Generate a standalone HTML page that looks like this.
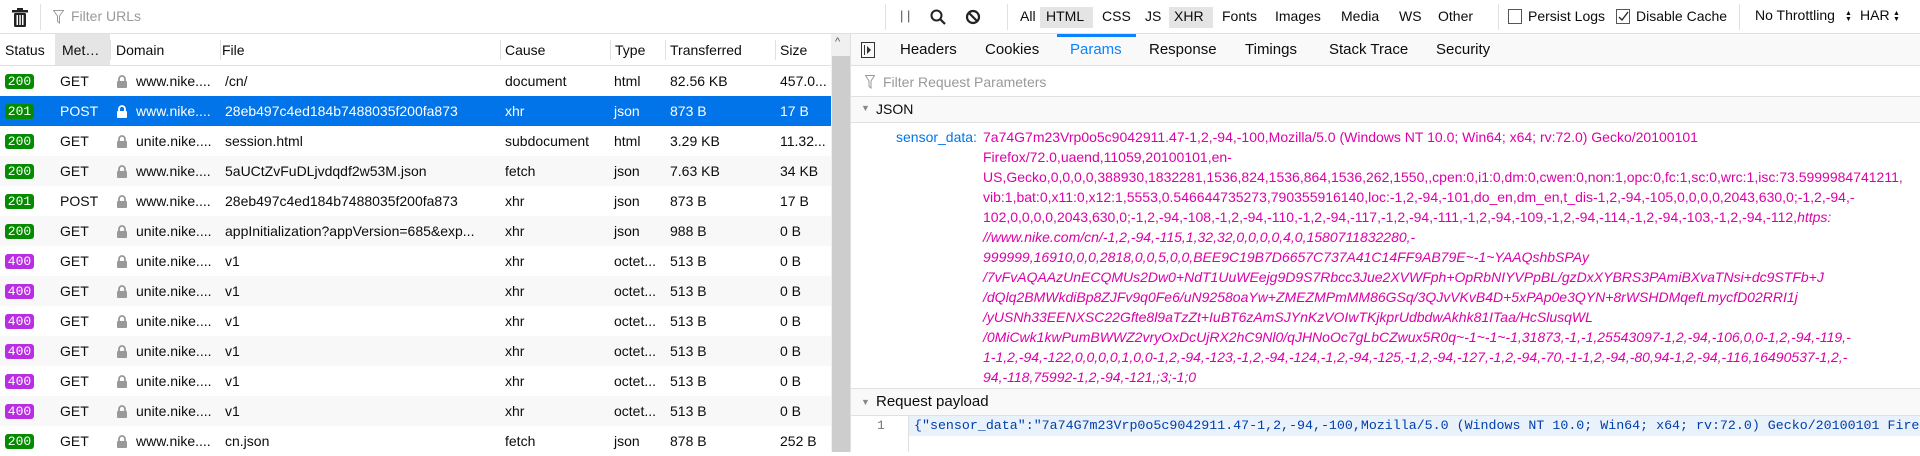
<!DOCTYPE html>
<html><head><meta charset="utf-8"><style>
*{box-sizing:border-box;margin:0;padding:0}
body{width:1920px;height:452px;overflow:hidden;background:#fff;font-family:"Liberation Sans",sans-serif;font-size:14px;color:#0c0c0d;position:relative}
.a{position:absolute;white-space:nowrap}
.row{position:absolute;left:0;width:831px;height:30px}
.row span{position:absolute;top:7px;white-space:nowrap}
.b{position:absolute;left:5px;top:8px!important;width:29px;height:15px;border-radius:3px;color:#fff;font-family:"Liberation Mono",monospace;font-size:13px;line-height:15px;text-align:center}
.g{background:#058b00}.p{background:#b92de3}
.lk{position:absolute;left:117px;top:9px;width:10px;height:13px}
.m{color:#dd00a9;font-size:14px;line-height:20px}
.m i{font-style:italic}
</style></head><body>
<!-- toolbar -->
<div class="a" style="left:0;top:0;width:1920px;height:34px;border-bottom:1px solid #e0e0e2;background:#fff"></div>
<svg class="a" style="left:12px;top:8px" width="16" height="19" viewBox="0 0 16 19"><rect x="0" y="2" width="16" height="2.5" fill="#222"/><rect x="5" y="0" width="6" height="2.5" fill="#222"/><rect x="2" y="5" width="12" height="14" rx="1.5" fill="#222"/><rect x="4.5" y="7" width="1.5" height="10" fill="#fff"/><rect x="7.3" y="7" width="1.5" height="10" fill="#fff"/><rect x="10" y="7" width="1.5" height="10" fill="#fff"/></svg>
<div class="a" style="left:40px;top:4px;width:1px;height:26px;background:#e0e0e2"></div>
<svg class="a" style="left:53px;top:10px" width="11" height="14" viewBox="0 0 11 14"><path d="M0.5 0.5h10L6.5 6v7l-2-1.5V6z" fill="none" stroke="#999" stroke-width="1"/></svg>
<div class="a" style="left:71px;top:8px;color:#999;font-size:14px">Filter URLs</div>
<div class="a" style="left:885px;top:4px;width:1px;height:26px;background:#e0e0e2"></div>
<div class="a" style="left:900px;top:8px;color:#555;font-size:13px">| |</div>
<svg class="a" style="left:930px;top:9px" width="16" height="16" viewBox="0 0 16 16"><circle cx="6.5" cy="6.5" r="5" fill="none" stroke="#222" stroke-width="2"/><path d="M10 10l5 5" stroke="#222" stroke-width="2.2"/></svg>
<svg class="a" style="left:965px;top:9px" width="16" height="16" viewBox="0 0 16 16"><circle cx="8" cy="8" r="6" fill="none" stroke="#222" stroke-width="2.2"/><path d="M4 4l8 8" stroke="#222" stroke-width="2.2"/></svg>
<div class="a" style="left:1007px;top:4px;width:1px;height:26px;background:#e0e0e2"></div>
<div class="a" style="left:1040px;top:7px;width:53px;height:21px;background:#e4e4e5"></div>
<div class="a" style="left:1169px;top:7px;width:44px;height:21px;background:#e4e4e5"></div>
<div class="a" style="left:1013px;top:8px;font-size:14px;word-spacing:0">
<span class="a" style="left:7px">All</span><span class="a" style="left:33px">HTML</span><span class="a" style="left:89px">CSS</span><span class="a" style="left:132px">JS</span><span class="a" style="left:161px">XHR</span><span class="a" style="left:209px">Fonts</span><span class="a" style="left:262px">Images</span><span class="a" style="left:328px">Media</span><span class="a" style="left:386px">WS</span><span class="a" style="left:425px">Other</span></div>
<div class="a" style="left:1498px;top:4px;width:1px;height:26px;background:#e0e0e2"></div>
<div class="a" style="left:1508px;top:9px;width:14px;height:15px;border:1px solid #555;background:#fff"></div>
<div class="a" style="left:1528px;top:8px">Persist Logs</div>
<div class="a" style="left:1616px;top:9px;width:14px;height:15px;border:1px solid #555;background:#fff"></div>
<svg class="a" style="left:1618px;top:11px" width="11" height="11" viewBox="0 0 11 11"><path d="M1 6l3 3 6-8" fill="none" stroke="#222" stroke-width="1.3"/></svg>
<div class="a" style="left:1636px;top:8px">Disable Cache</div>
<div class="a" style="left:1739px;top:4px;width:1px;height:26px;background:#e0e0e2"></div>
<div class="a" style="left:1755px;top:7px">No Throttling</div>
<div class="a" style="left:1845px;top:11px;font-size:7px;line-height:6px">▲<br>▼</div>
<div class="a" style="left:1860px;top:7px">HAR</div>
<div class="a" style="left:1893px;top:11px;font-size:7px;line-height:6px">▲<br>▼</div>

<!-- left header -->
<div class="a" style="left:0;top:34px;width:831px;height:32px;background:#fff;border-bottom:1px solid #e0e0e2"></div>
<div class="a" style="left:55px;top:34px;width:55px;height:31px;background:#e5e5e5"></div>
<div class="a" style="left:0;top:42px">
<span class="a" style="left:5px">Status</span><span class="a" style="left:62px">Met…</span><span class="a" style="left:116px">Domain</span><span class="a" style="left:222px">File</span><span class="a" style="left:505px">Cause</span><span class="a" style="left:615px">Type</span><span class="a" style="left:670px">Transferred</span><span class="a" style="left:780px">Size</span></div>
<div class="a" style="left:110px;top:40px;width:1px;height:20px;background:#e0e0e2"></div>
<div class="a" style="left:220px;top:40px;width:1px;height:20px;background:#e0e0e2"></div>
<div class="a" style="left:500px;top:40px;width:1px;height:20px;background:#e0e0e2"></div>
<div class="a" style="left:610px;top:40px;width:1px;height:20px;background:#e0e0e2"></div>
<div class="a" style="left:665px;top:40px;width:1px;height:20px;background:#e0e0e2"></div>
<div class="a" style="left:775px;top:40px;width:1px;height:20px;background:#e0e0e2"></div>

<div id="rows"></div>
<!-- scrollbar -->
<div class="a" style="left:831px;top:34px;width:20px;height:418px;background:#f0f0f0"></div>
<div class="a" style="left:832px;top:56px;width:18px;height:396px;background:#cdcdcd"></div>
<div class="a" style="left:835px;top:36px;font-size:11px;color:#555">^</div>

<!-- right panel -->
<div class="a" style="left:850px;top:34px;width:1px;height:418px;background:#e0e0e2"></div>
<div class="a" style="left:851px;top:34px;width:1069px;height:32px;background:#f9f9fa;border-bottom:1px solid #e0e0e2"></div>
<div class="a" style="left:861px;top:42px;width:14px;height:16px;border:1px solid #333"></div>
<div class="a" style="left:864px;top:45px;width:1px;height:10px;background:#333"></div>
<svg class="a" style="left:867px;top:46px" width="5" height="8"><path d="M0 0l4 4-4 4z" fill="#333"/></svg>
<div class="a" style="left:1057px;top:34px;width:79px;height:3px;background:#0a84ff"></div>
<div class="a" style="left:0;top:41px;font-size:15px">
<span class="a" style="left:900px">Headers</span><span class="a" style="left:985px">Cookies</span><span class="a" style="left:1070px;color:#0a84ff">Params</span><span class="a" style="left:1149px">Response</span><span class="a" style="left:1245px">Timings</span><span class="a" style="left:1329px">Stack Trace</span><span class="a" style="left:1436px">Security</span></div>
<div class="a" style="left:851px;top:66px;width:1069px;height:31px;border-bottom:1px solid #e0e0e2"></div>
<svg class="a" style="left:865px;top:75px" width="10" height="14" viewBox="0 0 10 14"><path d="M0.5 0.5h9L6 6v7L4 11.5V6z" fill="none" stroke="#999"/></svg>
<div class="a" style="left:883px;top:74px;color:#999">Filter Request Parameters</div>
<div class="a" style="left:851px;top:97px;width:1069px;height:26px;background:#f9f9fa;border-bottom:1px solid #e0e0e2"></div>
<div class="a" style="left:861px;top:103px;font-size:9px;color:#888">▼</div>
<div class="a" style="left:876px;top:101px;font-size:14px">JSON</div>
<div class="a" style="left:896px;top:127px;color:#0074e8;font-size:14px;line-height:20px">sensor_data:</div>
<div class="a m" style="left:983px;top:127px">
<div>7a74G7m23Vrp0o5c9042911.47-1,2,-94,-100,Mozilla/5.0 (Windows NT 10.0; Win64; x64; rv:72.0) Gecko/20100101</div>
<div>Firefox/72.0,uaend,11059,20100101,en-</div>
<div>US,Gecko,0,0,0,0,388930,1832281,1536,824,1536,864,1536,262,1550,,cpen:0,i1:0,dm:0,cwen:0,non:1,opc:0,fc:1,sc:0,wrc:1,isc:73.5999984741211,</div>
<div>vib:1,bat:0,x11:0,x12:1,5553,0.546644735273,790355916140,loc:-1,2,-94,-101,do_en,dm_en,t_dis-1,2,-94,-105,0,0,0,0,2043,630,0;-1,2,-94,-</div>
<div>102,0,0,0,0,2043,630,0;-1,2,-94,-108,-1,2,-94,-110,-1,2,-94,-117,-1,2,-94,-111,-1,2,-94,-109,-1,2,-94,-114,-1,2,-94,-103,-1,2,-94,-112,<i>https:</i></div>
<div><i>//www.nike.com/cn/-1,2,-94,-115,1,32,32,0,0,0,0,4,0,1580711832280,-</i></div>
<div><i>999999,16910,0,0,2818,0,0,5,0,0,BEE9C19B7D6657C737A41C14FF9AB79E~-1~YAAQshbSPAy</i></div>
<div><i>/7vFvAQAAzUnECQMUs2Dw0+NdT1UuWEejg9D9S7Rbcc3Jue2XVWFph+OpRbNIYVPpBL/gzDxXYBRS3PAmiBXvaTNsi+dc9STFb+J</i></div>
<div><i>/dQlq2BMWkdiBp8ZJFv9q0Fe6/uN9258oaYw+ZMEZMPmMM86GSq/3QJvVKvB4D+5xPAp0e3QYN+8rWSHDMqefLmycfD02RRI1j</i></div>
<div><i>/yUSNh33EENXSC22Gfte8l9aTzZt+IuBT6zAmSJYnKzVOIwTKjkprUdbdwAkhk81ITaa/HcSlusqWL</i></div>
<div><i>/0MiCwk1kwPumBWWZ2vryOxDcUjRX2hC9Nl0/qJHNoOc7gLbCZwux5R0q~-1~-1~-1,31873,-1,-1,25543097-1,2,-94,-106,0,0-1,2,-94,-119,-</i></div>
<div><i>1-1,2,-94,-122,0,0,0,0,1,0,0-1,2,-94,-123,-1,2,-94,-124,-1,2,-94,-125,-1,2,-94,-127,-1,2,-94,-70,-1-1,2,-94,-80,94-1,2,-94,-116,16490537-1,2,-</i></div>
<div><i>94,-118,75992-1,2,-94,-121,;3;-1;0</i></div>
</div>
<div class="a" style="left:851px;top:388px;width:1069px;height:28px;background:#f9f9fa;border-top:1px solid #e0e0e2;border-bottom:1px solid #e0e0e2"></div>
<div class="a" style="left:861px;top:397px;font-size:9px;color:#888">▼</div>
<div class="a" style="left:876px;top:393px;font-size:15px">Request payload</div>
<div class="a" style="left:908px;top:416px;width:1px;height:36px;background:#e0e0e2"></div>
<div class="a" style="left:909px;top:416px;width:1011px;height:20px;background:#e9f1fb"></div>
<div class="a" style="left:877px;top:418px;color:#777;font-family:'Liberation Mono',monospace;font-size:13px">1</div>
<div class="a" style="left:914px;top:418px;color:#003eaa;font-family:'Liberation Mono',monospace;font-size:13.3px">{"sensor_data":"7a74G7m23Vrp0o5c9042911.47-1,2,-94,-100,Mozilla/5.0 (Windows NT 10.0; Win64; x64; rv:72.0) Gecko/20100101 Firefox</div>

<script>
var d=[
['g','200','GET','www.nike....','/cn/','document','html','82.56 KB','457.0...'],
['g','201','POST','www.nike....','28eb497c4ed184b7488035f200fa873','xhr','json','873 B','17 B'],
['g','200','GET','unite.nike....','session.html','subdocument','html','3.29 KB','11.32...'],
['g','200','GET','www.nike....','5aUCtZvFuDLjvdqdf2w53M.json','fetch','json','7.63 KB','34 KB'],
['g','201','POST','www.nike....','28eb497c4ed184b7488035f200fa873','xhr','json','873 B','17 B'],
['g','200','GET','unite.nike....','appInitialization?appVersion=685&exp...','xhr','json','988 B','0 B'],
['p','400','GET','unite.nike....','v1','xhr','octet...','513 B','0 B'],
['p','400','GET','unite.nike....','v1','xhr','octet...','513 B','0 B'],
['p','400','GET','unite.nike....','v1','xhr','octet...','513 B','0 B'],
['p','400','GET','unite.nike....','v1','xhr','octet...','513 B','0 B'],
['p','400','GET','unite.nike....','v1','xhr','octet...','513 B','0 B'],
['p','400','GET','unite.nike....','v1','xhr','octet...','513 B','0 B'],
['g','200','GET','www.nike....','cn.json','fetch','json','878 B','252 B']];
var h='';
d.forEach(function(r,i){
var sel=i==1,bg=sel?'#0074e8':(i%2?'#f8f8f9':'#fff'),c=sel?'#fff':'#0c0c0d',lc=sel?'#fff':'#999';
h+='<div class="row" style="top:'+(66+30*i)+'px;background:'+bg+';color:'+c+'">'+
'<span class="b '+r[0]+'">'+r[1]+'</span>'+
'<span style="left:60px">'+r[2]+'</span>'+
'<svg class="lk" viewBox="0 0 10 13"><path d="M2 6V4a3 3 0 0 1 6 0v2" fill="none" stroke="'+lc+'" stroke-width="1.8"/><rect x="0" y="6" width="10" height="7" rx="1" fill="'+lc+'"/></svg>'+
'<span style="left:136px">'+r[3]+'</span>'+
'<span style="left:225px">'+r[4].replace('&','&amp;')+'</span>'+
'<span style="left:505px">'+r[5]+'</span>'+
'<span style="left:614px">'+r[6]+'</span>'+
'<span style="left:670px">'+r[7]+'</span>'+
'<span style="left:780px">'+r[8]+'</span></div>';});
document.getElementById('rows').innerHTML=h;
</script>
</body></html>
